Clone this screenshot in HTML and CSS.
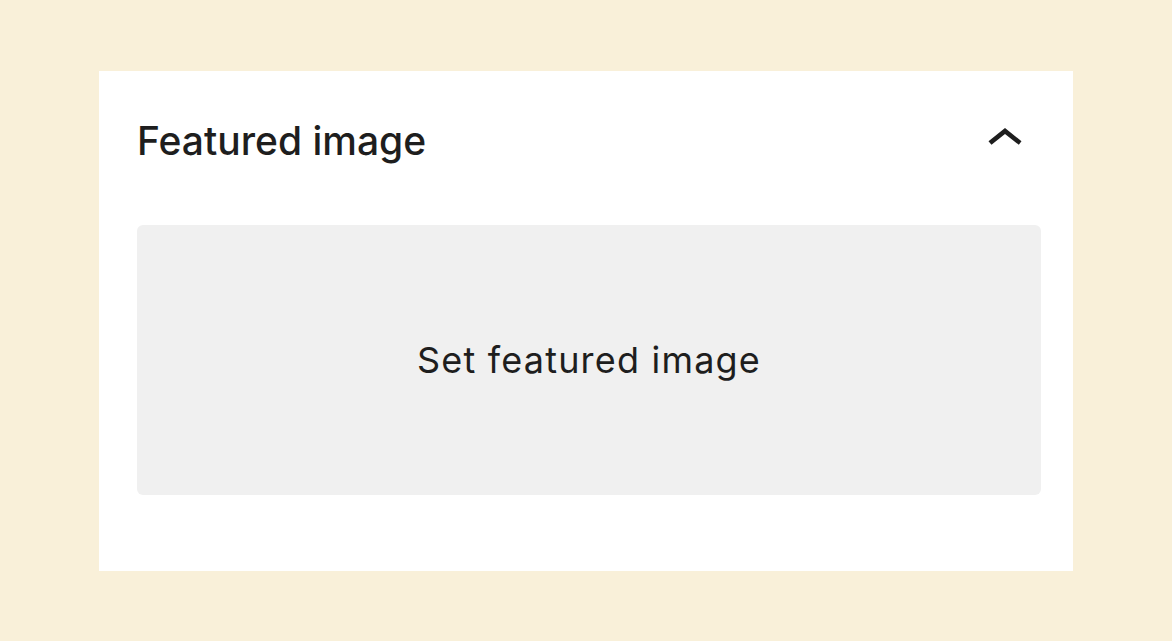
FILE: index.html
```html
<!DOCTYPE html>
<html lang="en">
<head>
    <meta charset="UTF-8">
    <meta name="viewport" content="width=device-width, initial-scale=1.0">
    <title>Featured image</title>
    <link rel="stylesheet" href="styles.css">
</head>
<body>

<!-- Featured image panel -->
<div class="panel">
    <div class="panel-header">
        <h2 class="panel-title">Featured image</h2>
        <button class="toggle" aria-label="Collapse">
            <svg viewBox="0 0 24 24" width="72" height="72"><path d="M6.5 12.4L12 8l5.5 4.4-.9 1.2L12 10l-4.5 3.6-1-1.2z"/></svg>
        </button>
    </div>
    <button class="featured-toggle">Set featured image</button>
</div>

</body>
</html>
```

FILE: styles.css
```css
body {
    margin: 0;
    background-color: #f9f0d9;
    font-family: Inter, "Noto Sans", sans-serif;
    color: #1e1e1e;
    padding: 71px 99px;
}
.panel {
    width: 974px;
    height: 500px;
    box-sizing: border-box;
    background: #fff;
    padding: 0 32px 0 38px;
}
.panel-header {
    display: flex;
    align-items: center;
    justify-content: space-between;
    padding: 33px 0 49px;
}
.panel-title {
    margin: 0;
    font-size: 39px;
    font-weight: 500;
}
.toggle {
    width: 72px;
    height: 72px;
    padding: 0;
    border: 0;
    background: none;
}
.toggle svg {
    display: block;
    fill: #1e1e1e;
}
.featured-toggle {
    display: flex;
    align-items: center;
    justify-content: center;
    width: 100%;
    height: 270px;
    border: 0;
    border-radius: 6px;
    background: #f0f0f0;
    font-family: inherit;
    font-size: 36px;
    letter-spacing: 1.2px;
    color: #1e1e1e;
}
```
